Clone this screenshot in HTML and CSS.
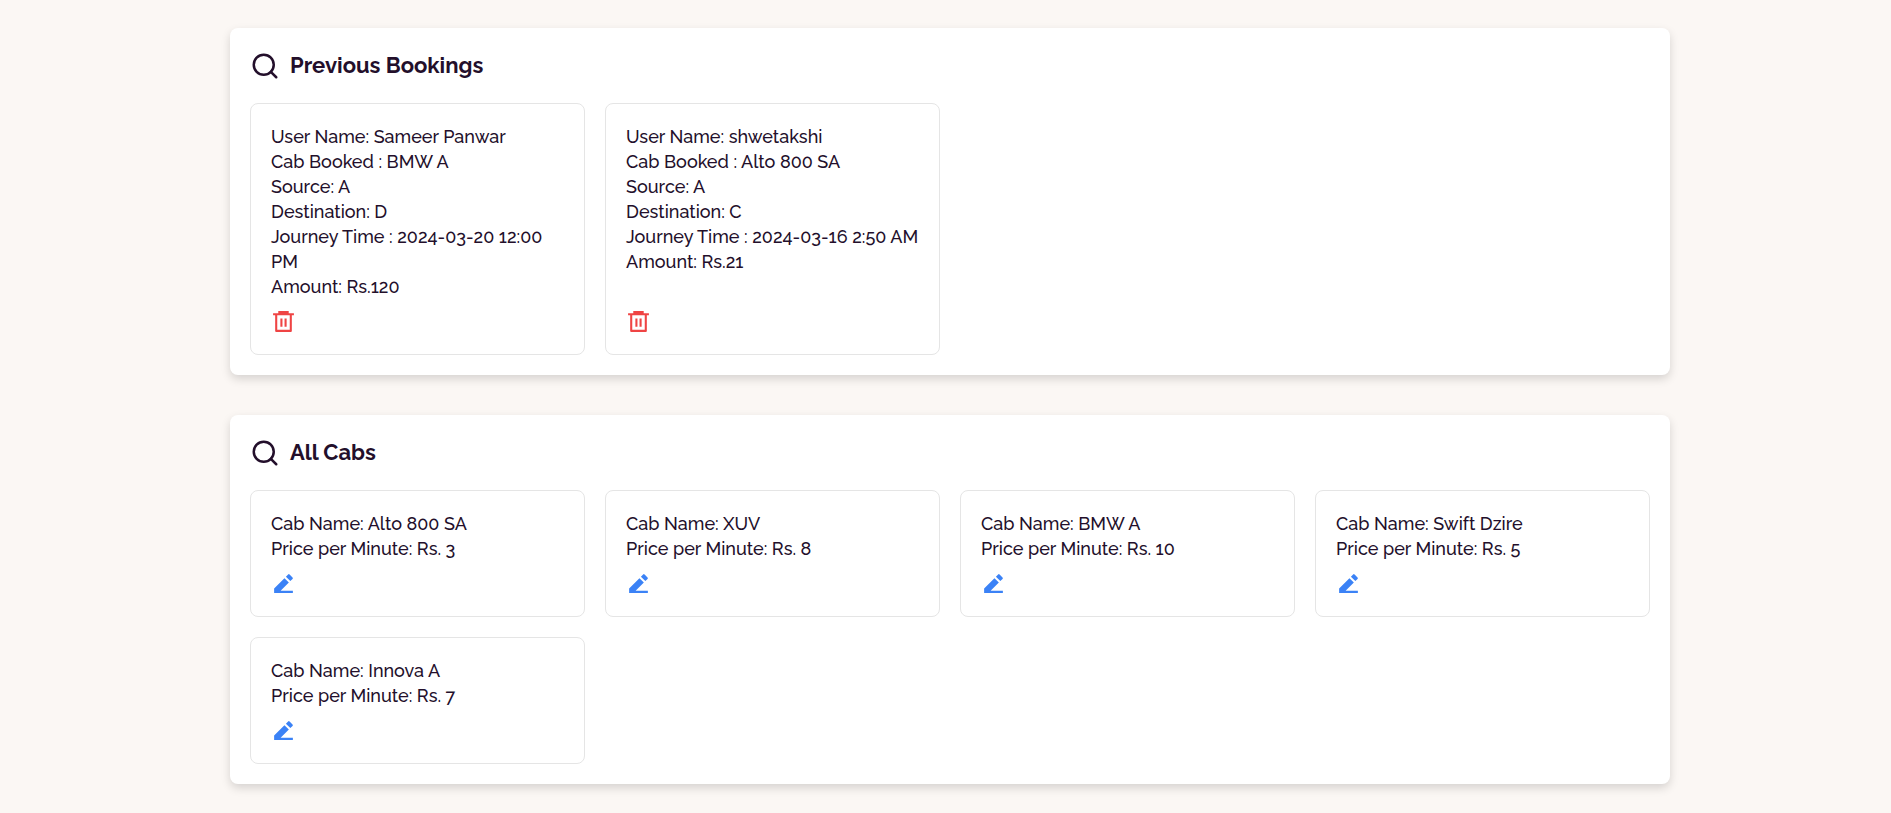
FILE: index.html
```html
<!DOCTYPE html>
<html lang="en">
<head>
<meta charset="utf-8">
<meta name="viewport" content="width=device-width, initial-scale=1">
<title>Bookings and Cabs</title>
<link rel="stylesheet" href="styles.css">
</head>
<body>
<svg class="sprite" aria-hidden="true">
  <symbol id="search" viewBox="0 0 24 24"><g fill="none" stroke="currentColor" stroke-width="2" stroke-linecap="round" stroke-linejoin="round"><circle cx="11" cy="11" r="8"/><path d="M21 21l-4.350-4.350"/></g></symbol>
  <symbol id="trash" viewBox="0 0 24 24"><path fill="currentColor" d="M7 4V2h10v2h5v2h-2v15a1 1 0 0 1-1 1H5a1 1 0 0 1-1-1V6H2V4h5zM6 6v14h12V6H6zm3 3h2v8H9V9zm4 0h2v8h-2V9z"/></symbol>
  <symbol id="edit" viewBox="0 0 24 24"><path fill="currentColor" d="M9.243 19H21v2H3v-4.243l9.900-9.900 4.242 4.244L9.242 19zm5.070-13.556l2.122-2.122a1 1 0 0 1 1.414 0l2.829 2.829a1 1 0 0 1 0 1.414l-2.122 2.121-4.242-4.242z"/></symbol>
</svg>
<main class="page">
  <section class="panel" aria-labelledby="bookings-title">
    <header class="panel-header">
      <svg class="panel-icon" aria-hidden="true"><use href="#search"/></svg>
      <h2 class="panel-title" id="bookings-title">Previous Bookings</h2>
    </header>
    <div class="grid">
      <article class="card">
        <div class="details">
          <p>User Name: Sameer Panwar</p>
          <p>Cab Booked : BMW A</p>
          <p>Source: A</p>
          <p>Destination: D</p>
          <p>Journey Time : 2024-03-20 12:00 PM</p>
          <p>Amount: Rs.120</p>
        </div>
        <button class="action delete" type="button" aria-label="Delete booking"><svg class="icon" aria-hidden="true"><use href="#trash"/></svg></button>
      </article>
      <article class="card">
        <div class="details">
          <p>User Name: shwetakshi</p>
          <p>Cab Booked : Alto 800 SA</p>
          <p>Source: A</p>
          <p>Destination: C</p>
          <p>Journey Time : 2024-03-16 2:50 AM</p>
          <p>Amount: Rs.21</p>
        </div>
        <button class="action delete" type="button" aria-label="Delete booking"><svg class="icon" aria-hidden="true"><use href="#trash"/></svg></button>
      </article>
    </div>
  </section>

  <section class="panel" aria-labelledby="cabs-title">
    <header class="panel-header">
      <svg class="panel-icon" aria-hidden="true"><use href="#search"/></svg>
      <h2 class="panel-title" id="cabs-title">All Cabs</h2>
    </header>
    <div class="grid">
      <article class="card">
        <div class="details"><p>Cab Name: Alto 800 SA</p><p>Price per Minute: Rs. 3</p></div>
        <button class="action edit" type="button" aria-label="Edit Alto 800 SA"><svg class="icon" aria-hidden="true"><use href="#edit"/></svg></button>
      </article>
      <article class="card">
        <div class="details"><p>Cab Name: XUV</p><p>Price per Minute: Rs. 8</p></div>
        <button class="action edit" type="button" aria-label="Edit XUV"><svg class="icon" aria-hidden="true"><use href="#edit"/></svg></button>
      </article>
      <article class="card">
        <div class="details"><p>Cab Name: BMW A</p><p>Price per Minute: Rs. 10</p></div>
        <button class="action edit" type="button" aria-label="Edit BMW A"><svg class="icon" aria-hidden="true"><use href="#edit"/></svg></button>
      </article>
      <article class="card">
        <div class="details"><p>Cab Name: Swift Dzire</p><p>Price per Minute: Rs. 5</p></div>
        <button class="action edit" type="button" aria-label="Edit Swift Dzire"><svg class="icon" aria-hidden="true"><use href="#edit"/></svg></button>
      </article>
      <article class="card">
        <div class="details"><p>Cab Name: Innova A</p><p>Price per Minute: Rs. 7</p></div>
        <button class="action edit" type="button" aria-label="Edit Innova A"><svg class="icon" aria-hidden="true"><use href="#edit"/></svg></button>
      </article>
    </div>
  </section>
</main>
</body>
</html>
```

FILE: styles.css
```css
* {
  box-sizing: border-box;
}

body {
  margin: 0;
  background: #fbf7f4;
  color: #230f2b;
  font-family: Raleway, Lato, "Open Sans", sans-serif;
  font-size: 18px;
  font-weight: 500;
  font-variant-numeric: oldstyle-nums;
  line-height: 25px;
}

.sprite {
  position: absolute;
  width: 0;
  height: 0;
}

.page {
  display: flex;
  flex-direction: column;
  align-items: center;
  gap: 40px;
  padding: 28px 0 28px 9px;
}

.panel {
  width: 100%;
  max-width: 1440px;
  padding: 20px;
  border-radius: 8px;
  background: #fff;
  box-shadow: 0 4px 10px rgba(0, 0, 0, 0.15);
}

.panel-header {
  display: flex;
  align-items: center;
  gap: 10px;
  margin-bottom: 20px;
}

.panel-icon {
  width: 30px;
  height: 30px;
}

.panel-title {
  margin: 0;
  font-size: 22px;
  font-weight: 700;
  line-height: 35px;
}

.grid {
  display: grid;
  grid-template-columns: repeat(auto-fill, minmax(300px, 1fr));
  gap: 20px;
}

.card {
  display: flex;
  flex-direction: column;
  justify-content: space-between;
  align-items: flex-start;
  gap: 10px;
  padding: 20px;
  border: 1px solid #e5e5e5;
  border-radius: 8px;
}

.details p {
  margin: 0;
}

.action {
  display: flex;
  padding: 0;
  border: 0;
  background: none;
  cursor: pointer;
}

.delete {
  color: #ef4444;
}

.edit {
  color: #3b82f6;
}

.icon {
  width: 25px;
  height: 25px;
}
```
